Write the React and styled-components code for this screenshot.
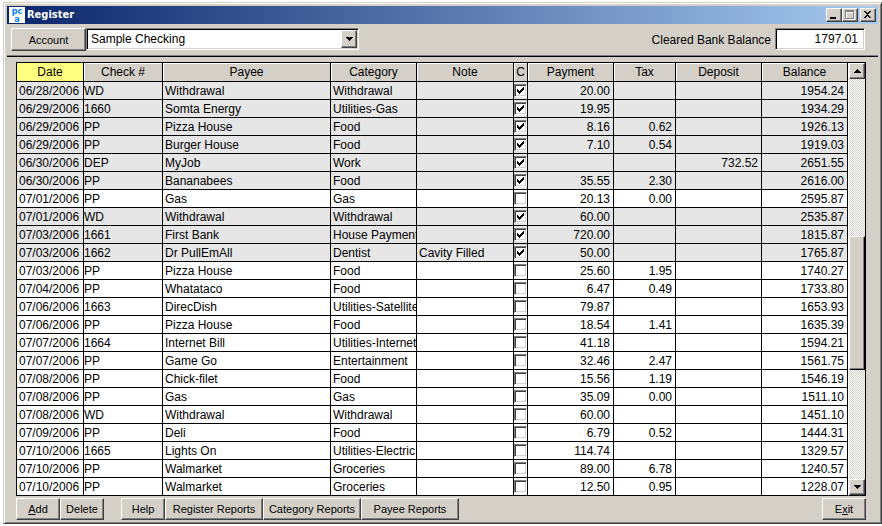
import React, { useState } from 'react';
import styled, { createGlobalStyle, css } from 'styled-components';

const GlobalStyle = createGlobalStyle`
    * {
        box-sizing: border-box;
    }
    body {
        margin: 0;
        background-color: white;
        font-family: 'Liberation Sans', Arial, sans-serif;
        font-size: 12px;
        line-height: 14px;
        color: black;
    }
    button, input, select {
        margin: 0;
        font: inherit;
        color: inherit;
        border-radius: 0;
    }
`;

const raised = css`
    border: 1px solid;
    border-color: #fff #404040 #404040 #fff;
    box-shadow: inset -1px -1px 0 #808080;
    background-color: #d4d0c8;
`;

const sunken = css`
    border: 1px solid;
    border-color: #808080 #fff #fff #808080;
    box-shadow: inset 1px 1px 0 #000, inset -1px -1px 0 #d4d0c8;
    background-color: #fff;
`;

const Desktop = styled.div`
    padding: 2px 0 2px 3px;
`;

const Window = styled.main`
    padding: 3px;
    border: 1px solid;
    border-color: #d4d0c8 #404040 #404040 #d4d0c8;
    box-shadow: inset 1px 1px 0 #fff, inset -1px -1px 0 #808080;
    background-color: #d4d0c8;
`;

const TitleBar = styled.header`
    display: flex;
    align-items: center;
    height: 18px;
    padding: 0 2px;
    background-image: linear-gradient(to right, #0a246a, #a6caf0);
`;

const Title = styled.h1`
    flex: 1;
    margin: 0 0 0 2px;
    color: white;
    font-family: 'DejaVu Sans Condensed', 'DejaVu Sans', Tahoma, sans-serif;
    font-size: 11px;
    font-weight: 700;
    font-stretch: condensed;
`;

const WindowButtons = styled.div`
    display: flex;
`;

const WindowButton = styled.button`
    ${raised}
    display: flex;
    width: 16px;
    height: 14px;
    padding: 0;
    margin-left: ${(props) => (props.$apart ? '2px' : '0')};
`;

const Toolbar = styled.section`
    display: flex;
    align-items: flex-start;
    height: 33px;
    padding: 4px 13px 0 4px;
    border-bottom: 1px solid #000;
    box-shadow: inset 0 -1px 0 #808080;
`;

const PushButton = styled.button`
    ${raised}
    width: ${(props) => props.$width || 44}px;
    height: ${(props) => props.$height || 22}px;
    padding: 0;
    font-size: 11px;
    white-space: nowrap;
`;

const Combo = styled.div`
    ${sunken}
    display: grid;
    width: 273px;
    height: 22px;
    padding: 1px;
`;

const ComboSelect = styled.select`
    grid-area: 1 / 1;
    appearance: none;
    border: none;
    padding: 0 18px 0 3px;
    background: transparent;
    outline: none;
`;

const ComboArrow = styled.span`
    ${raised}
    grid-area: 1 / 1;
    justify-self: end;
    display: flex;
    align-items: center;
    justify-content: center;
    width: 16px;
    pointer-events: none;
`;

const BalanceLabel = styled.label`
    margin-left: auto;
    padding: 5px 4px 0 0;
`;

const BalanceInput = styled.input`
    ${sunken}
    width: 90px;
    height: 22px;
    padding: 1px 6px;
    text-align: right;
    outline: none;
`;

const Content = styled.section`
    padding: 5px 12px 0 9px;
`;

const GridFrame = styled.div`
    display: flex;
    border: 1px solid #000;
    border-bottom: none;
`;

const Grid = styled.table`
    flex: 1;
    width: 0;
    table-layout: fixed;
    border-collapse: separate;
    border-spacing: 0;
`;

const Col = styled.col`
    width: ${(props) => (props.$width ? `${props.$width}px` : 'auto')};
`;

const HeadCell = styled.th`
    height: 19px;
    padding: 0;
    overflow: hidden;
    border-right: 1px solid #000;
    border-bottom: 1px solid #000;
    box-shadow: ${(props) => (props.$sorted ? 'none' : 'inset 1px 1px 0 #fff')};
    background-color: ${(props) => (props.$sorted ? '#ffff80' : '#d4d0c8')};
    font-weight: 400;
`;

const Row = styled.tr`
    background-color: ${(props) => (props.$cleared ? '#e6e6e6' : '#fff')};
`;

const Cell = styled.td`
    height: 18px;
    padding: 0 ${(props) => (props.$align === 'right' ? 3 : 0)}px 0
        ${(props) => (props.$tight ? 0 : 2)}px;
    overflow: hidden;
    border-right: 1px solid #000;
    border-bottom: 1px solid #000;
    text-align: ${(props) => props.$align || 'left'};
    white-space: nowrap;
`;

const CheckBox = styled.input`
    appearance: none;
    display: block;
    width: 13px;
    height: 13px;
    padding: 2px;
    border: 1px solid;
    border-color: #808080 #fff #fff #808080;
    box-shadow: inset 1px 1px 0 #404040, inset -1px -1px 0 #d4d0c8;
    background-color: #fff;

    &:checked::before {
        content: '';
        display: block;
        width: 7px;
        height: 7px;
        background-color: #000;
        clip-path: polygon(
            0 2px, 1px 2px, 1px 3px, 2px 3px, 2px 4px, 3px 4px, 3px 3px,
            4px 3px, 4px 2px, 5px 2px, 5px 1px, 6px 1px, 6px 0, 7px 0,
            7px 3px, 6px 3px, 6px 4px, 5px 4px, 5px 5px, 4px 5px, 4px 6px,
            3px 6px, 3px 7px, 2px 7px, 2px 6px, 1px 6px, 1px 5px, 0 5px
        );
    }
`;

const ScrollBar = styled.div`
    display: flex;
    flex-direction: column;
    width: 17px;
    border-left: 1px solid #fff;
    border-bottom: 1px solid #000;
    background: repeating-conic-gradient(#fff 0 25%, #d4d0c8 0 50%) 0 0 / 2px 2px;
`;

const ScrollButton = styled.button`
    ${raised}
    display: flex;
    align-items: center;
    justify-content: center;
    height: 16px;
    padding: 0;
`;

const TrackSpace = styled.div`
    flex: ${(props) => props.$share} 0 0;
`;

const Thumb = styled.div`
    ${raised}
    flex: ${(props) => props.$share} 0 0;
    border-right-color: #000;
    border-bottom-color: #000;
`;

const Footer = styled.footer`
    display: flex;
    justify-content: space-between;
    padding: 2px 12px 0 9px;
`;

const ButtonGroup = styled.div`
    display: flex;
`;

const Gap = styled.div`
    width: 17px;
`;

const columns = [
    { key: 'date', title: 'Date', width: 67 },
    { key: 'check', title: 'Check #', width: 79 },
    { key: 'payee', title: 'Payee' },
    { key: 'category', title: 'Category', width: 86 },
    { key: 'note', title: 'Note', width: 97 },
    { key: 'cleared', title: 'C', width: 14 },
    { key: 'payment', title: 'Payment', width: 86, align: 'right' },
    { key: 'tax', title: 'Tax', width: 62, align: 'right' },
    { key: 'deposit', title: 'Deposit', width: 86, align: 'right' },
    { key: 'balance', title: 'Balance', width: 86, align: 'right' },
];

// same order as the columns
const entries = [
    ['06/28/2006', 'WD', 'Withdrawal', 'Withdrawal', '', true, '20.00', '', '', '1954.24'],
    ['06/29/2006', '1660', 'Somta Energy', 'Utilities-Gas', '', true, '19.95', '', '', '1934.29'],
    ['06/29/2006', 'PP', 'Pizza House', 'Food', '', true, '8.16', '0.62', '', '1926.13'],
    ['06/29/2006', 'PP', 'Burger House', 'Food', '', true, '7.10', '0.54', '', '1919.03'],
    ['06/30/2006', 'DEP', 'MyJob', 'Work', '', true, '', '', '732.52', '2651.55'],
    ['06/30/2006', 'PP', 'Bananabees', 'Food', '', true, '35.55', '2.30', '', '2616.00'],
    ['07/01/2006', 'PP', 'Gas', 'Gas', '', false, '20.13', '0.00', '', '2595.87'],
    ['07/01/2006', 'WD', 'Withdrawal', 'Withdrawal', '', true, '60.00', '', '', '2535.87'],
    ['07/03/2006', '1661', 'First Bank', 'House Payment', '', true, '720.00', '', '', '1815.87'],
    ['07/03/2006', '1662', 'Dr PullEmAll', 'Dentist', 'Cavity Filled', true, '50.00', '', '', '1765.87'],
    ['07/03/2006', 'PP', 'Pizza House', 'Food', '', false, '25.60', '1.95', '', '1740.27'],
    ['07/04/2006', 'PP', 'Whatataco', 'Food', '', false, '6.47', '0.49', '', '1733.80'],
    ['07/06/2006', '1663', 'DirecDish', 'Utilities-Satellite', '', false, '79.87', '', '', '1653.93'],
    ['07/06/2006', 'PP', 'Pizza House', 'Food', '', false, '18.54', '1.41', '', '1635.39'],
    ['07/07/2006', '1664', 'Internet Bill', 'Utilities-Internet', '', false, '41.18', '', '', '1594.21'],
    ['07/07/2006', 'PP', 'Game Go', 'Entertainment', '', false, '32.46', '2.47', '', '1561.75'],
    ['07/08/2006', 'PP', 'Chick-filet', 'Food', '', false, '15.56', '1.19', '', '1546.19'],
    ['07/08/2006', 'PP', 'Gas', 'Gas', '', false, '35.09', '0.00', '', '1511.10'],
    ['07/08/2006', 'WD', 'Withdrawal', 'Withdrawal', '', false, '60.00', '', '', '1451.10'],
    ['07/09/2006', 'PP', 'Deli', 'Food', '', false, '6.79', '0.52', '', '1444.31'],
    ['07/10/2006', '1665', 'Lights On', 'Utilities-Electric', '', false, '114.74', '', '', '1329.57'],
    ['07/10/2006', 'PP', 'Walmarket', 'Groceries', '', false, '89.00', '6.78', '', '1240.57'],
    ['07/10/2006', 'PP', 'Walmarket', 'Groceries', '', false, '12.50', '0.95', '', '1228.07'],
];

const Arrow = ({ up }) => (
    <svg width="7" height="4" viewBox="0 0 7 4" shapeRendering="crispEdges" aria-hidden="true">
        <path d={up ? 'M3 0h1v1h1v1h1v1h1v1H0V3h1V2h1V1h1z' : 'M0 0h7v1H6v1H5v1H4v1H3V3H2V2H1V1H0z'} />
    </svg>
);

const AppIcon = () => (
    <svg width="16" height="18" viewBox="0 0 16 18" aria-hidden="true">
        <rect y="1" width="16" height="16" fill="#fff" />
        <g
            fill="#0080ff"
            fontFamily="'DejaVu Sans', Verdana, sans-serif"
            fontSize="8"
            fontWeight="700"
            textAnchor="middle"
        >
            <text x="8" y="8">pc</text>
            <text x="8" y="16">a</text>
        </g>
    </svg>
);

const TitleGlyph = ({ children }) => (
    <svg width="14" height="12" viewBox="0 0 14 12" shapeRendering="crispEdges" aria-hidden="true">
        {children}
    </svg>
);

const App = () => {
    const [rows, setRows] = useState(entries);

    const toggleCleared = (index) =>
        setRows(rows.map((row, i) => (i === index ? row.map((v, c) => (c === 5 ? !v : v)) : row)));

    return (
        <Desktop>
            <GlobalStyle />
            <Window>
                <TitleBar>
                    <AppIcon />
                    <Title>Register</Title>
                    <WindowButtons>
                        <WindowButton aria-label="Minimize">
                            <TitleGlyph>
                                <path d="M3 8h6v2H3z" />
                            </TitleGlyph>
                        </WindowButton>
                        <WindowButton aria-label="Maximize" disabled>
                            <TitleGlyph>
                                <path fill="#fff" fillRule="evenodd" d="M3 2h9v9H3zM4 4v6h7V4z" />
                                <path fill="#808080" fillRule="evenodd" d="M2 1h9v9H2zM3 3v6h7V3z" />
                            </TitleGlyph>
                        </WindowButton>
                        <WindowButton aria-label="Close" $apart>
                            <TitleGlyph>
                                <path d="M3 2h2v1h1v1h1V3h1V2h2v1H9v1H8v1H7v1h1v1h1v1h1v1H8V8H7V7H6v1H5v1H3V8h1V7h1V6h1V5H5V4H4V3H3z" />
                            </TitleGlyph>
                        </WindowButton>
                    </WindowButtons>
                </TitleBar>

                <Toolbar>
                    <PushButton $width={75} $height={23}>
                        Account
                    </PushButton>
                    <Combo>
                        <ComboSelect aria-label="Account" defaultValue="Sample Checking">
                            <option>Sample Checking</option>
                        </ComboSelect>
                        <ComboArrow>
                            <Arrow />
                        </ComboArrow>
                    </Combo>
                    <BalanceLabel htmlFor="cleared-balance">Cleared Bank Balance</BalanceLabel>
                    <BalanceInput id="cleared-balance" type="text" value="1797.01" readOnly />
                </Toolbar>

                <Content>
                    <GridFrame>
                        <Grid>
                            <colgroup>
                                {columns.map((col) => (
                                    <Col key={col.key} $width={col.width} />
                                ))}
                            </colgroup>
                            <thead>
                                <tr>
                                    {columns.map((col) => (
                                        <HeadCell key={col.key} scope="col" $sorted={col.key === 'date'}>
                                            {col.title}
                                        </HeadCell>
                                    ))}
                                </tr>
                            </thead>
                            <tbody>
                                {rows.map((row, index) => (
                                    <Row key={index} $cleared={row[5]}>
                                        {columns.map((col, c) => (
                                            <Cell
                                                key={col.key}
                                                $align={col.align}
                                                $tight={col.key === 'check' || col.key === 'cleared'}
                                            >
                                                {col.key === 'cleared' ? (
                                                    <CheckBox
                                                        type="checkbox"
                                                        aria-label={`Cleared ${row[2]} ${row[0]}`}
                                                        checked={row[c]}
                                                        onChange={() => toggleCleared(index)}
                                                    />
                                                ) : (
                                                    row[c]
                                                )}
                                            </Cell>
                                        ))}
                                    </Row>
                                ))}
                            </tbody>
                        </Grid>
                        <ScrollBar>
                            <ScrollButton aria-label="Scroll up">
                                <Arrow up />
                            </ScrollButton>
                            <TrackSpace $share={158} />
                            <Thumb $share={132} />
                            <TrackSpace $share={110} />
                            <ScrollButton aria-label="Scroll down">
                                <Arrow />
                            </ScrollButton>
                        </ScrollBar>
                    </GridFrame>
                </Content>

                <Footer>
                    <ButtonGroup>
                        <PushButton>
                            <u>A</u>dd
                        </PushButton>
                        <PushButton>Delete</PushButton>
                        <Gap />
                        <PushButton>Help</PushButton>
                        <PushButton $width={98}>Register Reports</PushButton>
                        <PushButton $width={98}>Category Reports</PushButton>
                        <PushButton $width={98}>Payee Reports</PushButton>
                    </ButtonGroup>
                    <PushButton>
                        E<u>x</u>it
                    </PushButton>
                </Footer>
            </Window>
        </Desktop>
    );
};

export default App;
